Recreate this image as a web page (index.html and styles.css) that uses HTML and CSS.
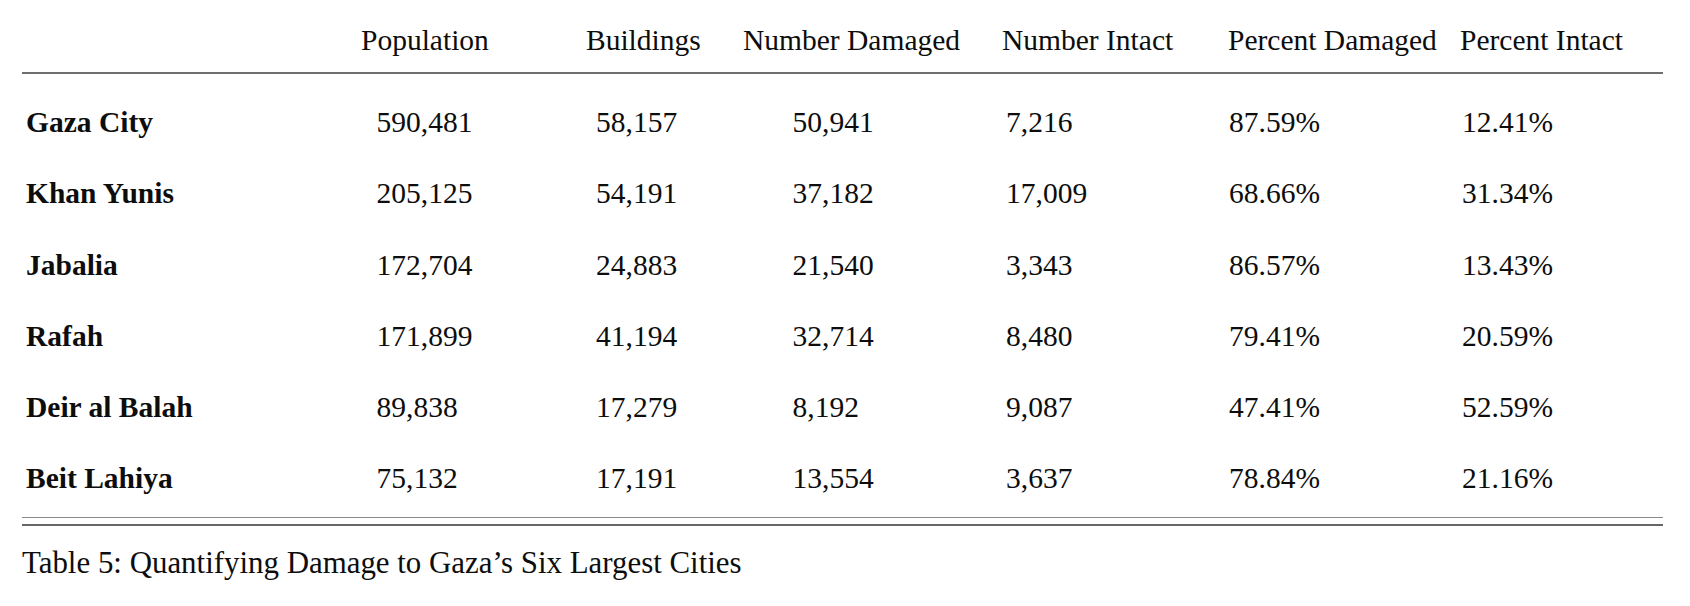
FILE: index.html
```html
<!DOCTYPE html>
<html lang="en">
<head>
<meta charset="utf-8">
<title>Table 5</title>
<link rel="stylesheet" href="styles.css">
</head>
<body>
<div class="table">
  <div class="thead row">
    <div class="cell"></div>
    <div class="cell">Population</div>
    <div class="cell">Buildings</div>
    <div class="cell">Number Damaged</div>
    <div class="cell">Number Intact</div>
    <div class="cell">Percent Damaged</div>
    <div class="cell">Percent Intact</div>
  </div>
  <div class="tbody">
    <div class="row">
      <div class="cell city">Gaza City</div>
      <div class="cell">590,481</div>
      <div class="cell">58,157</div>
      <div class="cell">50,941</div>
      <div class="cell">7,216</div>
      <div class="cell">87.59%</div>
      <div class="cell">12.41%</div>
    </div>
    <div class="row">
      <div class="cell city">Khan Yunis</div>
      <div class="cell">205,125</div>
      <div class="cell">54,191</div>
      <div class="cell">37,182</div>
      <div class="cell">17,009</div>
      <div class="cell">68.66%</div>
      <div class="cell">31.34%</div>
    </div>
    <div class="row">
      <div class="cell city">Jabalia</div>
      <div class="cell">172,704</div>
      <div class="cell">24,883</div>
      <div class="cell">21,540</div>
      <div class="cell">3,343</div>
      <div class="cell">86.57%</div>
      <div class="cell">13.43%</div>
    </div>
    <div class="row">
      <div class="cell city">Rafah</div>
      <div class="cell">171,899</div>
      <div class="cell">41,194</div>
      <div class="cell">32,714</div>
      <div class="cell">8,480</div>
      <div class="cell">79.41%</div>
      <div class="cell">20.59%</div>
    </div>
    <div class="row">
      <div class="cell city">Deir al Balah</div>
      <div class="cell">89,838</div>
      <div class="cell">17,279</div>
      <div class="cell">8,192</div>
      <div class="cell">9,087</div>
      <div class="cell">47.41%</div>
      <div class="cell">52.59%</div>
    </div>
    <div class="row">
      <div class="cell city">Beit Lahiya</div>
      <div class="cell">75,132</div>
      <div class="cell">17,191</div>
      <div class="cell">13,554</div>
      <div class="cell">3,637</div>
      <div class="cell">78.84%</div>
      <div class="cell">21.16%</div>
    </div>
  </div>
  <div class="bottom-rule"></div>
  <p class="caption">Table 5: Quantifying Damage to Gaza’s Six Largest Cities</p>
</div>
</body>
</html>
```

FILE: styles.css
```css
html, body {
  margin: 0;
  padding: 0;
  background: #ffffff;
}

body {
  font-family: "Liberation Serif", "Times New Roman", serif;
  color: #0d0d0d;
}

.table {
  margin-left: 22px;
  width: 1641px;
  padding-top: 20px;
}

.row {
  display: grid;
  grid-template-columns: 339px 225px 157px 259px 226px 232px 203px;
  font-size: 29.5px;
  white-space: nowrap;
}

.thead {
  line-height: 40px;
  padding-bottom: 12px;
  border-bottom: 2px solid #6e6e6e;
}

.tbody {
  padding-top: 13px;
  padding-bottom: 2px;
  border-bottom: 1px solid #8a8a8a;
}

.tbody .row {
  height: 71.3px;
  line-height: 71.3px;
}

.tbody .cell:nth-child(1) { padding-left: 4px; }
.tbody .cell:nth-child(2) { padding-left: 15.5px; }
.tbody .cell:nth-child(3) { padding-left: 10px; }
.tbody .cell:nth-child(4) { padding-left: 49.5px; }
.tbody .cell:nth-child(5) { padding-left: 4px; }
.tbody .cell:nth-child(6) { padding-left: 1px; }
.tbody .cell:nth-child(7) { padding-left: 2px; }

.city {
  font-weight: 700;
}

.bottom-rule {
  margin-top: 6px;
  border-top: 2.5px solid #666666;
}

.caption {
  margin: 19px 0 0 0;
  font-size: 30.9px;
  line-height: 36px;
  white-space: nowrap;
}
```
